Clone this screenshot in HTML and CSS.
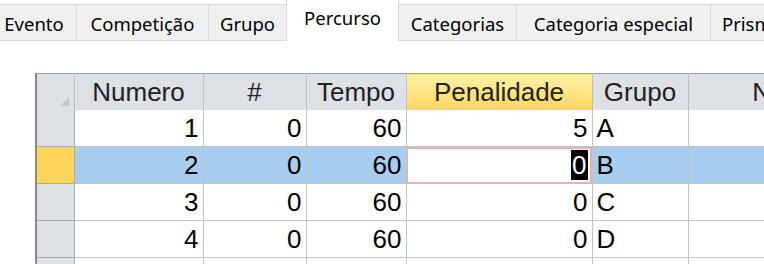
FILE: index.html
```html
<!DOCTYPE html>
<html lang="pt-BR">
<head>
    <meta charset="UTF-8">
    <title>Percurso</title>
    <link rel="stylesheet" href="styles.css">
</head>
<body>
    <div class="tabs">
        <div class="tab t-evento">Evento</div>
        <div class="tab t-comp">Competição</div>
        <div class="tab t-grupo">Grupo</div>
        <div class="tab t-perc active">Percurso</div>
        <div class="tab t-cat">Categorias</div>
        <div class="tab t-esp">Categoria especial</div>
        <div class="tab t-prisma">Prisma</div>
    </div>

    <div class="grid-wrap">
        <table class="grid">
            <colgroup>
                <col class="c-row">
                <col class="c-num">
                <col class="c-hash">
                <col class="c-tempo">
                <col class="c-pen">
                <col class="c-grupo">
                <col class="c-nome">
            </colgroup>
            <thead>
                <tr>
                    <th class="corner"><span class="tri"></span></th>
                    <th>Numero</th>
                    <th>#</th>
                    <th>Tempo</th>
                    <th class="hot">Penalidade</th>
                    <th>Grupo</th>
                    <th>Nome</th>
                </tr>
            </thead>
            <tbody>
                <tr>
                    <td class="rh"></td>
                    <td class="n">1</td>
                    <td class="n">0</td>
                    <td class="n">60</td>
                    <td class="n">5</td>
                    <td>A</td>
                    <td></td>
                </tr>
                <tr class="sel">
                    <td class="rh"></td>
                    <td class="n">2</td>
                    <td class="n">0</td>
                    <td class="n">60</td>
                    <td class="n edit"><span class="mark">0</span></td>
                    <td>B</td>
                    <td></td>
                </tr>
                <tr>
                    <td class="rh"></td>
                    <td class="n">3</td>
                    <td class="n">0</td>
                    <td class="n">60</td>
                    <td class="n">0</td>
                    <td>C</td>
                    <td></td>
                </tr>
                <tr>
                    <td class="rh"></td>
                    <td class="n">4</td>
                    <td class="n">0</td>
                    <td class="n">60</td>
                    <td class="n">0</td>
                    <td>D</td>
                    <td></td>
                </tr>
                <tr>
                    <td class="rh"></td>
                    <td class="n"></td>
                    <td class="n"></td>
                    <td class="n"></td>
                    <td class="n"></td>
                    <td></td>
                    <td></td>
                </tr>
            </tbody>
        </table>
    </div>
</body>
</html>
```

FILE: styles.css
```css
html, body {
    margin: 0;
    padding: 0;
    background: #fff;
    overflow: hidden;
    width: 764px;
    height: 264px;
}

.tabs {
    display: flex;
    align-items: flex-end;
    height: 41px;
    border-bottom: 1px solid #d9d9d9;
    box-sizing: border-box;
    margin-left: -8px;
    white-space: nowrap;
    font-family: "Noto Sans", "Open Sans", sans-serif;
    font-size: 18.5px;
    color: #000;
}

.tab {
    height: 36px;
    line-height: 30px;
    padding-top: 4px;
    text-align: center;
    background: #f0f0f0;
    border-right: 1px solid #d9d9d9;
    border-top: 1px solid #d9d9d9;
    box-sizing: border-box;
    flex-shrink: 0;
    overflow: hidden;
}

.t-evento { width: 85px; }
.t-comp { width: 132px; }
.t-grupo { width: 78px; }
.t-perc { width: 113px; }
.t-cat { width: 118px; }
.t-esp { width: 194px; }
.t-prisma { width: 80px; text-align: left; padding-left: 11px; }

.tab.active {
    height: 41px;
    padding-top: 4px;
    line-height: 28px;
    background: #fff;
    margin-bottom: -1px;
    border-top: none;
    border-left: 1px solid #d9d9d9;
    margin-left: -1px;
}

.grid-wrap {
    padding: 32px 0 0 35px;
}

.grid {
    border-collapse: collapse;
    table-layout: fixed;
    width: 850px;
    font-family: "Liberation Sans", Arial, sans-serif;
    font-size: 26px;
    color: #000;
    border-top: 1px solid #a0a0a0;
    border-left: 2px solid #8a8a8a;
}

.c-row { width: 38px; }
.c-num { width: 129px; }
.c-hash { width: 103px; }
.c-tempo { width: 100px; }
.c-pen { width: 186px; }
.c-grupo { width: 96px; }
.c-nome { width: 198px; }

.grid th {
    height: 36px;
    padding: 0;
    font-weight: normal;
    color: #222;
    background: #dde1e6;
    border-right: 1px solid #bcc2c9;
    text-align: center;
    line-height: 36px;
}

.grid th.hot {
    background: linear-gradient(#fff2a8, #ffd65c);
}

.grid th.corner {
    position: relative;
}

.tri {
    position: absolute;
    right: 5px;
    bottom: 4px;
    width: 0;
    height: 0;
    border-left: 9px solid transparent;
    border-bottom: 9px solid #c4c8cc;
}

.grid td {
    height: 36px;
    padding: 0 4px;
    border-right: 1px solid #c3c3c3;
    border-bottom: 1px solid #c3c3c3;
    line-height: 36px;
    white-space: nowrap;
    overflow: hidden;
}

.grid td.n {
    text-align: right;
}

.grid td.rh {
    background: #dde1e6;
    border-right: 1px solid #a9aeb4;
    border-bottom: 1px solid #a9aeb4;
}

.grid tr.sel td {
    background: #a7cdf0;
}

.grid tr.sel td.rh {
    background: #ffd55a;
}

.grid tr.sel td.edit {
    background: #fff;
    outline: 2px solid #e8b0b0;
    outline-offset: -2px;
}

.mark {
    background: #000;
    color: #fff;
    padding: 0 1px;
}
```
